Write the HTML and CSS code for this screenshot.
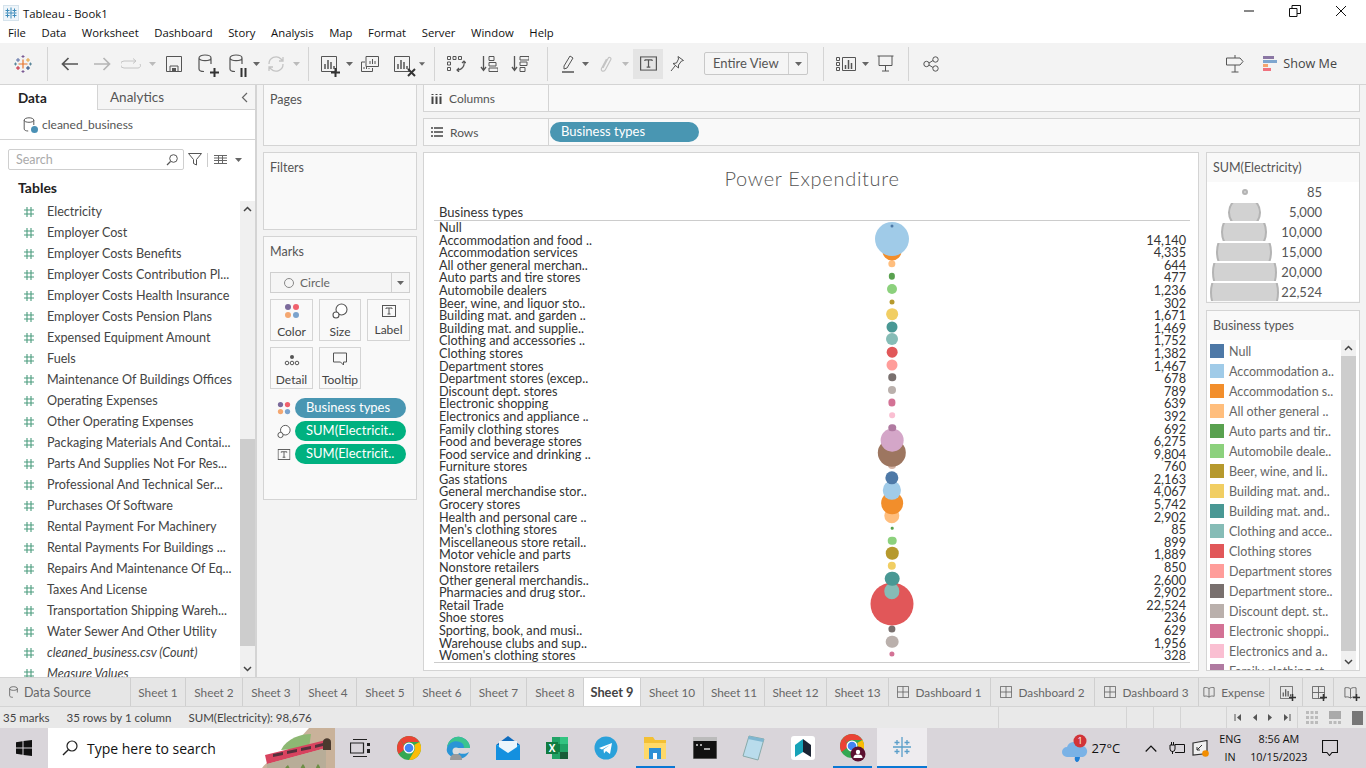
FILE: index.html
```html
<!DOCTYPE html>
<html lang="en">
<head>
    <meta charset="UTF-8">
    <title>Tableau - Book1</title>
    <link rel="stylesheet" href="styles.css">
</head>
<body>

    <!-- shared icons -->
    <svg class="defs" width="0" height="0">
        <symbol id="hash" viewBox="0 0 12 12"><path d="M4 1v10M8 1v10M1 4h10M1 8h10" fill="none" stroke="#4b9c7e" stroke-width="1.1"/></symbol>
        <symbol id="caret" viewBox="0 0 7 4"><path d="M0 0h7L3.5 4z" fill="#666"/></symbol>
        <symbol id="caret-off" viewBox="0 0 7 4"><path d="M0 0h7L3.5 4z" fill="#bbb"/></symbol>
        <symbol id="cyl" viewBox="0 0 14 20"><path d="M1 4c0-4 12-4 12 0v6M1 4c0 3.500 12 3.500 12 0M1 4v11c0 1.500 2 2.500 5 2.500" fill="none" stroke="#555" stroke-width="1.200"/></symbol>
        <symbol id="tbox" viewBox="0 0 14 12"><rect x=".5" y=".5" width="13" height="11" fill="none" stroke="#555"/><path d="M4 3h6M7 3v6M5.500 9h3M4 3v1M10 3v1" fill="none" stroke="#555"/></symbol>
        <symbol id="lasso" viewBox="0 0 16 16"><circle cx="9.500" cy="6.500" r="5.500" fill="#fff" stroke="#555" stroke-width="1.100"/><circle cx="4" cy="12" r="3" fill="#fff" stroke="#555" stroke-width="1.100"/></symbol>
        <symbol id="dots" viewBox="0 0 16 16"><circle cx="4" cy="4" r="3" fill="#7b6a9b"/><circle cx="12" cy="4" r="3" fill="#f0616d"/><circle cx="4" cy="12" r="3" fill="#f4a771"/><circle cx="12" cy="12" r="3" fill="#7ba3cd"/></symbol>
        <symbol id="grid4" viewBox="0 0 14 14"><path d="M.5.500h13v13H.5zM7 .5v13M.5 7h13" fill="none" stroke="#666"/></symbol>
        <symbol id="story" viewBox="0 0 14 14"><path d="M7 3C5 1.500 3 1.500 1 2v10c2-.5 4-.5 6 1 2-1.500 4-1.500 6-1V2c-2-.5-4-.5-6 1zM7 3v10" fill="none" stroke="#666"/></symbol>
        <symbol id="chart" viewBox="0 0 16 16"><path d="M.5.500h15v15H.5z" fill="none" stroke="#555"/><path d="M4 13V8M7 13V4M10 13V6M13 13v-3" stroke="#555" stroke-width="1.500"/></symbol>
        <symbol id="plus" viewBox="0 0 9 9"><path d="M4.500 0v9M0 4.500h9" stroke="#333" stroke-width="2"/></symbol>
        <symbol id="chrome" viewBox="0 0 24 24"><circle cx="12" cy="12" r="12" fill="#34a853"/><path d="M12 0a12 12 0 0 1 10.400 6H12a6 6 0 0 0-5.200 3L3.500 3.600A12 12 0 0 1 12 0z" fill="#ea4335"/><path d="M3.500 3.600 8 12a5 5 0 0 0 0 1L1.600 18A12 12 0 0 1 3.500 3.600z" fill="#ea4335"/><path d="M22.400 6A12 12 0 0 1 12 24l5.200-9a6 6 0 0 0 0-6z" fill="#fbbc05"/><circle cx="12" cy="12" r="5.500" fill="#fff"/><circle cx="12" cy="12" r="4.300" fill="#4285f4"/></symbol>
    </svg>

    <header class="titlebar">
        <svg class="app-icon" width="16" height="16" viewBox="0 0 16 16"><rect x=".5" y=".5" width="15" height="15" fill="#eef5fa" stroke="#d5e3ec"/><path d="M8 2.500v11M2.500 8h11M4.500 3.500v4M2.500 5.500h4M11.500 3.500v4M9.500 5.500h4M4.500 8.500v4M2.500 10.500h4M11.500 8.500v4M9.500 10.500h4" stroke="#3f8cbb" stroke-width="1"/></svg>
        <span class="app-name">Tableau - Book1</span>
        <div class="window-buttons">
            <svg width="12" height="12" viewBox="0 0 12 12"><path d="M1 6h10" stroke="#111"/></svg>
            <svg width="12" height="12" viewBox="0 0 12 12"><path d="M.5 3.500h7.500v8H.5zM3 3.500V.5h8.500v8H8" fill="none" stroke="#111"/></svg>
            <svg width="12" height="12" viewBox="0 0 12 12"><path d="M1 1l10 10M11 1 1 11" stroke="#111"/></svg>
        </div>
    </header>

    <nav class="menubar">
        <span>File</span><span>Data</span><span>Worksheet</span><span>Dashboard</span><span>Story</span><span>Analysis</span><span>Map</span><span>Format</span><span>Server</span><span>Window</span><span>Help</span>
    </nav>

    <div class="toolbar">
        <div class="tool w30 logo-tool">
            <svg width="18" height="18" viewBox="0 0 18 18"><path d="M9 4.500v9M4.500 9h9" stroke="#e8762c" stroke-width="1.200"/><path d="M4 3v4M2 5h4" stroke="#5b6fa5" stroke-width="1"/><path d="M14 3v4M12 5h4" stroke="#e8a23c" stroke-width="1"/><path d="M4 11v4M2 13h4" stroke="#c72037" stroke-width="1"/><path d="M14 11v4M12 13h4" stroke="#1f447a" stroke-width="1"/><path d="M9 0v3M7.500 1.500h3M9 15v3M7.500 16.500h3" stroke="#7a5a94" stroke-width="1"/><path d="M0 9h3M1.500 7.500v3M15 9h3M16.500 7.500v3" stroke="#5b879b" stroke-width="1"/></svg>
        </div>
        <i class="sep first-sep"></i>
        <div class="tool w32"><svg width="18" height="14" viewBox="0 0 18 14"><path d="M17 7H2M7.500 1 1.500 7l6 6" fill="none" stroke="#555" stroke-width="1.700"/></svg></div>
        <div class="tool w32"><svg width="18" height="14" viewBox="0 0 18 14"><path d="M1 7h15M10.500 1l6 6-6 6" fill="none" stroke="#b5b5b5" stroke-width="1.700"/></svg></div>
        <div class="tool w26"><svg width="20" height="12" viewBox="0 0 20 12"><path d="M14 3H3a2.500 2.500 0 0 0 0 7h14a2.500 2.500 0 0 0 2-4M12 .5 15 3l-3 2.500" fill="none" stroke="#c4c4c4"/></svg></div>
        <div class="tool w16"><svg class="caret" width="7" height="4"><use href="#caret-off"/></svg></div>
        <div class="tool w28"><svg width="16" height="16" viewBox="0 0 16 16"><path d="M.5.500h15v15H.5z" fill="none" stroke="#555"/><path d="M4 15.500V10h8v5.500" fill="none" stroke="#555"/><path d="M6 12h4v3.500H6z" fill="#555"/></svg></div>
        <div class="tool w34 ds-tool"><svg width="14" height="20"><use href="#cyl"/></svg><svg class="badge-plus" width="9" height="9"><use href="#plus"/></svg></div>
        <div class="tool w28 ds-tool"><svg width="14" height="20"><use href="#cyl"/></svg><svg class="badge-plus" width="7" height="9" viewBox="0 0 7 9"><path d="M1.500 0v9M5.500 0v9" stroke="#333" stroke-width="2"/></svg></div>
        <div class="tool w12"><svg class="caret" width="7" height="4"><use href="#caret"/></svg></div>
        <div class="tool w28"><svg width="18" height="16" viewBox="0 0 18 16"><path d="M2 8a7 7 0 0 1 12-5l2 2M16 8a7 7 0 0 1-12 5l-2-2M16 1v4h-4M2 15v-4h4" fill="none" stroke="#c4c4c4" stroke-width="1.300"/></svg></div>
        <div class="tool w12"><svg class="caret" width="7" height="4"><use href="#caret-off"/></svg></div>
        <i class="sep"></i>
        <div class="tool w28 ds-tool"><svg width="16" height="16"><use href="#chart"/></svg><svg class="badge-plus" width="9" height="9"><use href="#plus"/></svg></div>
        <div class="tool w12"><svg class="caret" width="7" height="4"><use href="#caret"/></svg></div>
        <div class="tool w30"><svg width="18" height="16" viewBox="0 0 18 16"><path d="M5 .5h12.500v10H5z" fill="#f3f3f3" stroke="#555"/><path d="M9 8V5M11.500 8V3M14 8V5" stroke="#555"/><path d="M.5 6H4M.5 6v9.500h11V12" fill="none" stroke="#555"/><path d="M3 13v-2M5.500 13v-2M8 13v-1" stroke="#555"/></svg></div>
        <div class="tool w34 ds-tool"><svg width="16" height="16"><use href="#chart"/></svg><svg class="badge-plus" width="9" height="9" viewBox="0 0 9 9"><path d="M1 1l7 7M8 1 1 8" stroke="#333" stroke-width="2"/></svg></div>
        <div class="tool w6"><svg class="caret" width="7" height="4"><use href="#caret"/></svg></div>
        <i class="sep sep-wide"></i>
        <div class="tool w30"><svg width="19" height="16" viewBox="0 0 19 16"><path d="M.5.500h3v3h-3zM6 .5h3v3H6zM11.500.5h3v3h-3zM.5 6h3v3h-3zM.5 11.500h3v3h-3z" fill="none" stroke="#555"/><path d="M17 5c1 5-2 9-7 9M12 12l-2 2 2 2M15 7l2-2 2 2" fill="none" stroke="#555" stroke-width="1.200"/></svg></div>
        <div class="tool w36"><svg width="18" height="16" viewBox="0 0 18 16"><path d="M3.500 0v14M1 11l2.500 3.500L6 11" fill="none" stroke="#555" stroke-width="1.300"/><path d="M9 .5h5v4H9zM9 6.500h7v3.500H9zM9 12h9v3.500H9z" fill="none" stroke="#555"/></svg></div>
        <div class="tool w26"><svg width="18" height="16" viewBox="0 0 18 16"><path d="M3.500 0v14M1 11l2.500 3.500L6 11" fill="none" stroke="#555" stroke-width="1.300"/><path d="M9 .5h9v3.500H9zM9 6h7v3.500H9zM9 11.500h5v4H9z" fill="none" stroke="#555"/></svg></div>
        <i class="sep sep-wider"></i>
        <div class="tool w26"><svg width="14" height="18" viewBox="0 0 14 18"><path d="M3 11 9 1l3 2-6 10-3 1z" fill="none" stroke="#555"/><path d="M1 17h12" stroke="#555" stroke-width="1.500"/></svg></div>
        <div class="tool w8"><svg class="caret" width="7" height="4"><use href="#caret"/></svg></div>
        <div class="tool w32"><svg width="13" height="18" viewBox="0 0 13 18"><path d="M4 13 9 3.500c1-2 3.500-1 2.800 1L6.500 14.500c-1.500 3-5 1.500-4-1L7.500 4" fill="none" stroke="#c4c4c4" stroke-width="1.200"/></svg></div>
        <div class="tool w8"><svg class="caret" width="7" height="4"><use href="#caret-off"/></svg></div>
        <div class="tool w30 tool-active"><svg width="17" height="15" viewBox="0 0 14 12"><use href="#tbox"/></svg></div>
        <div class="tool w28"><svg width="14" height="16" viewBox="0 0 14 16"><path d="M8 .5l5.500 4-2 .5-3 4 0 3L3 7.500l3.500-.5 2-4zM5 10l-4 5" fill="none" stroke="#555"/></svg></div>
        <div class="fit-select">
            <span class="fit-label">Entire View</span>
            <span class="fit-arrow"><svg width="7" height="4"><use href="#caret"/></svg></span>
        </div>
        <i class="sep sep-fit"></i>
        <div class="tool w30"><svg width="20" height="14" viewBox="0 0 20 14"><path d="M.5.500h3v3h-3zM.5 5.500h3v3h-3zM.5 10.500h3v3h-3zM6.500.5h13v13h-13z" fill="none" stroke="#555"/><path d="M9.500 12V8M12.500 12V3M15.500 12V6" stroke="#555" stroke-width="1.500"/></svg></div>
        <div class="tool w8"><svg class="caret" width="7" height="4"><use href="#caret"/></svg></div>
        <div class="tool w33"><svg width="17" height="17" viewBox="0 0 17 17"><path d="M.5 1h16M2 1v9.500h13V1M8.500 10.500V16M5 16h7" fill="none" stroke="#555"/></svg></div>
        <i class="sep"></i>
        <div class="tool w32"><svg width="16" height="16" viewBox="0 0 16 16"><circle cx="3.500" cy="8" r="2.700" fill="none" stroke="#555"/><circle cx="12.500" cy="3.500" r="2.700" fill="none" stroke="#555"/><circle cx="12.500" cy="12.500" r="2.700" fill="none" stroke="#555"/><path d="M6 7l4-2.500M6 9l4 2.500" stroke="#555"/></svg></div>
        <div class="toolbar-right">
            <div class="tool w30"><svg width="18" height="18" viewBox="0 0 18 18"><path d="M9 0v3M9 10v7M5.500 17h7M.5 3H14l3 3.500L14 10H.5z" fill="none" stroke="#555"/></svg></div>
            <div class="show-me">
                <svg width="14" height="16" viewBox="0 0 14 16"><rect width="11" height="3" fill="#8a76a3"/><rect y="4" width="14" height="3" fill="#7ea6cf"/><rect y="8" width="5" height="3" fill="#f4a56f"/><rect y="12" width="8" height="3" fill="#f0727e"/></svg>
                <span>Show Me</span>
            </div>
        </div>
    </div>

    <main class="workspace">

        <aside class="data-pane">
            <div class="pane-tabs">
                <div class="pane-tab pane-tab-on">Data</div>
                <div class="pane-tab">Analytics <svg class="collapse" width="7" height="11" viewBox="0 0 7 11"><path d="M6 1 1.500 5.500 6 10" fill="none" stroke="#666" stroke-width="1.200"/></svg></div>
            </div>
            <div class="source-row">
                <span class="source-icon"><svg width="12" height="16"><use href="#cyl"/></svg><i class="source-tick"></i></span>
                cleaned_business
            </div>
            <div class="search-row">
                <div class="search-box">
                    <span>Search</span>
                    <svg width="12" height="12" viewBox="0 0 12 12"><circle cx="7.500" cy="4.500" r="3.800" fill="none" stroke="#555"/><path d="M4.500 7.500 1 11" stroke="#555" stroke-width="1.300"/></svg>
                </div>
                <svg width="14" height="13" viewBox="0 0 14 13"><path d="M.5.500h13L8.500 6.500V12l-3-1.500v-4z" fill="none" stroke="#555"/></svg>
                <i class="search-sep"></i>
                <svg width="13" height="9" viewBox="0 0 13 9"><path d="M0 .5h13M0 3h13M0 5.500h13M0 8.500h13M4.500 0v9M8.500 0v9" stroke="#666"/></svg>
                <svg class="search-caret" width="7" height="4"><use href="#caret"/></svg>
            </div>
            <h3 class="tables-head">Tables</h3>
            <div class="fields-wrap">
                <ul class="fields">
                    <li><svg width="12" height="12"><use href="#hash"/></svg>Electricity</li>
                    <li><svg width="12" height="12"><use href="#hash"/></svg>Employer Cost</li>
                    <li><svg width="12" height="12"><use href="#hash"/></svg>Employer Costs Benefits</li>
                    <li><svg width="12" height="12"><use href="#hash"/></svg>Employer Costs Contribution Pl...</li>
                    <li><svg width="12" height="12"><use href="#hash"/></svg>Employer Costs Health Insurance</li>
                    <li><svg width="12" height="12"><use href="#hash"/></svg>Employer Costs Pension Plans</li>
                    <li><svg width="12" height="12"><use href="#hash"/></svg>Expensed Equipment Amount</li>
                    <li><svg width="12" height="12"><use href="#hash"/></svg>Fuels</li>
                    <li><svg width="12" height="12"><use href="#hash"/></svg>Maintenance Of Buildings Offices</li>
                    <li><svg width="12" height="12"><use href="#hash"/></svg>Operating Expenses</li>
                    <li><svg width="12" height="12"><use href="#hash"/></svg>Other Operating Expenses</li>
                    <li><svg width="12" height="12"><use href="#hash"/></svg>Packaging Materials And Contai...</li>
                    <li><svg width="12" height="12"><use href="#hash"/></svg>Parts And Supplies Not For Res...</li>
                    <li><svg width="12" height="12"><use href="#hash"/></svg>Professional And Technical Ser...</li>
                    <li><svg width="12" height="12"><use href="#hash"/></svg>Purchases Of Software</li>
                    <li><svg width="12" height="12"><use href="#hash"/></svg>Rental Payment For Machinery</li>
                    <li><svg width="12" height="12"><use href="#hash"/></svg>Rental Payments For Buildings ...</li>
                    <li><svg width="12" height="12"><use href="#hash"/></svg>Repairs And Maintenance Of Eq...</li>
                    <li><svg width="12" height="12"><use href="#hash"/></svg>Taxes And License</li>
                    <li><svg width="12" height="12"><use href="#hash"/></svg>Transportation Shipping Wareh...</li>
                    <li><svg width="12" height="12"><use href="#hash"/></svg>Water Sewer And Other Utility</li>
                    <li class="calc"><svg width="12" height="12"><use href="#hash"/></svg>cleaned_business.csv (Count)</li>
                    <li class="calc"><svg width="12" height="12"><use href="#hash"/></svg>Measure Values</li>
                </ul>
                <div class="scrollbar">
                    <svg class="scroll-up" width="9" height="6" viewBox="0 0 9 6"><path d="M1 5l3.500-3.500L8 5" fill="none" stroke="#444" stroke-width="1.500"/></svg>
                    <div class="scroll-thumb"></div>
                    <svg class="scroll-down" width="9" height="6" viewBox="0 0 9 6"><path d="M1 1l3.500 3.500L8 1" fill="none" stroke="#444" stroke-width="1.500"/></svg>
                </div>
            </div>
        </aside>

        <section class="cards">
            <div class="card pages-card"><div class="card-title">Pages</div></div>
            <div class="card filters-card"><div class="card-title">Filters</div></div>
            <div class="card marks-card">
                <div class="card-title">Marks</div>
                <div class="mark-select">
                    <span class="mark-type"><i class="ring"></i>Circle</span>
                    <span class="mark-arrow"><svg width="7" height="4"><use href="#caret"/></svg></span>
                </div>
                <div class="mark-buttons">
                    <div class="mark-btn"><svg width="16" height="16"><use href="#dots"/></svg>Color</div>
                    <div class="mark-btn"><svg width="16" height="16"><use href="#lasso"/></svg>Size</div>
                    <div class="mark-btn"><svg width="14" height="12" viewBox="0 0 14 12"><use href="#tbox"/></svg>Label</div>
                    <div class="mark-btn"><svg width="16" height="16" viewBox="0 0 16 16"><circle cx="8" cy="6" r="2" fill="#555"/><circle cx="3" cy="12" r="1.800" fill="none" stroke="#555"/><circle cx="8" cy="12" r="1.800" fill="none" stroke="#555"/><circle cx="13" cy="12" r="1.800" fill="none" stroke="#555"/></svg>Detail</div>
                    <div class="mark-btn"><svg width="16" height="16" viewBox="0 0 16 16"><path d="M1.500 2h13v9h-3v3l-3-3h-7z" fill="none" stroke="#555"/></svg>Tooltip</div>
                </div>
                <div class="mark-pills">
                    <div class="mark-pill"><svg width="14" height="14"><use href="#dots"/></svg><span class="pill pill-blue">Business types</span></div>
                    <div class="mark-pill"><svg width="15" height="15"><use href="#lasso"/></svg><span class="pill pill-green">SUM(Electricit..</span></div>
                    <div class="mark-pill"><svg width="13" height="11" viewBox="0 0 14 12"><use href="#tbox"/></svg><span class="pill pill-green">SUM(Electricit..</span></div>
                </div>
            </div>
        </section>

        <section class="view-col">
            <div class="shelf">
                <div class="shelf-name"><svg width="11" height="11" viewBox="0 0 11 11"><path d="M1.500 1v1M5.500 1v1M9.500 1v1M1.500 3.500V11M5.500 3.500V11M9.500 3.500V11" stroke="#444" stroke-width="2"/></svg>Columns</div>
            </div>
            <div class="shelf">
                <div class="shelf-name"><svg width="12" height="10" viewBox="0 0 12 10"><path d="M0 1h2M3 1h9M0 5h2M3 5h9M0 9h2M3 9h9" stroke="#444" stroke-width="1.500"/></svg>Rows</div>
                <span class="pill pill-blue rows-pill">Business types</span>
            </div>

            <div class="view-area">
                <div class="chart">
                    <h1 class="chart-title">Power Expenditure</h1>
                    <div class="chart-head">Business types</div>
                    <div class="chart-rows">
                        <div class="row"><span>Null</span><i class="dot" style="--d:3px;--c:#4e79a7;z-index:35"></i></div>
                        <div class="row"><span>Accommodation and food ..</span><i class="dot" style="--d:34px;--c:#a0cbe8;z-index:34"></i><span>14,140</span></div>
                        <div class="row"><span>Accommodation services</span><i class="dot" style="--d:19px;--c:#f28e2b;z-index:33"></i><span>4,335</span></div>
                        <div class="row"><span>All other general merchan..</span><i class="dot" style="--d:7.3px;--c:#ffbe7d;z-index:32"></i><span>644</span></div>
                        <div class="row"><span>Auto parts and tire stores</span><i class="dot" style="--d:6.3px;--c:#59a14f;z-index:31"></i><span>477</span></div>
                        <div class="row"><span>Automobile dealers</span><i class="dot" style="--d:10px;--c:#8cd17d;z-index:30"></i><span>1,236</span></div>
                        <div class="row"><span>Beer, wine, and liquor sto..</span><i class="dot" style="--d:5px;--c:#b6992d;z-index:29"></i><span>302</span></div>
                        <div class="row"><span>Building mat. and garden ..</span><i class="dot" style="--d:11.7px;--c:#f1ce63;z-index:28"></i><span>1,671</span></div>
                        <div class="row"><span>Building mat. and supplie..</span><i class="dot" style="--d:11px;--c:#499894;z-index:27"></i><span>1,469</span></div>
                        <div class="row"><span>Clothing and accessories ..</span><i class="dot" style="--d:12px;--c:#86bcb6;z-index:26"></i><span>1,752</span></div>
                        <div class="row"><span>Clothing stores</span><i class="dot" style="--d:10.7px;--c:#e15759;z-index:25"></i><span>1,382</span></div>
                        <div class="row"><span>Department stores</span><i class="dot" style="--d:11px;--c:#ff9d9a;z-index:24"></i><span>1,467</span></div>
                        <div class="row"><span>Department stores (excep..</span><i class="dot" style="--d:7.5px;--c:#79706e;z-index:23"></i><span>678</span></div>
                        <div class="row"><span>Discount dept. stores</span><i class="dot" style="--d:8px;--c:#bab0ac;z-index:22"></i><span>789</span></div>
                        <div class="row"><span>Electronic shopping</span><i class="dot" style="--d:7.2px;--c:#d37295;z-index:21"></i><span>639</span></div>
                        <div class="row"><span>Electronics and appliance ..</span><i class="dot" style="--d:5.7px;--c:#fabfd2;z-index:20"></i><span>392</span></div>
                        <div class="row"><span>Family clothing stores</span><i class="dot" style="--d:7.5px;--c:#b07aa1;z-index:19"></i><span>692</span></div>
                        <div class="row"><span>Food and beverage stores</span><i class="dot" style="--d:22.7px;--c:#d4a6c8;z-index:18"></i><span>6,275</span></div>
                        <div class="row"><span>Food service and drinking ..</span><i class="dot" style="--d:28.4px;--c:#9d7660;z-index:17"></i><span>9,804</span></div>
                        <div class="row"><span>Furniture stores</span><i class="dot" style="--d:7.9px;--c:#d7b5a6;z-index:16"></i><span>760</span></div>
                        <div class="row"><span>Gas stations</span><i class="dot" style="--d:13.3px;--c:#4e79a7;z-index:15"></i><span>2,163</span></div>
                        <div class="row"><span>General merchandise stor..</span><i class="dot" style="--d:18.3px;--c:#a0cbe8;z-index:14"></i><span>4,067</span></div>
                        <div class="row"><span>Grocery stores</span><i class="dot" style="--d:21.7px;--c:#f28e2b;z-index:13"></i><span>5,742</span></div>
                        <div class="row"><span>Health and personal care ..</span><i class="dot" style="--d:15.4px;--c:#ffbe7d;z-index:12"></i><span>2,902</span></div>
                        <div class="row"><span>Men's clothing stores</span><i class="dot" style="--d:2.6px;--c:#59a14f;z-index:11"></i><span>85</span></div>
                        <div class="row"><span>Miscellaneous store retail..</span><i class="dot" style="--d:8.6px;--c:#8cd17d;z-index:10"></i><span>899</span></div>
                        <div class="row"><span>Motor vehicle and parts</span><i class="dot" style="--d:12.5px;--c:#b6992d;z-index:9"></i><span>1,889</span></div>
                        <div class="row"><span>Nonstore retailers</span><i class="dot" style="--d:8.4px;--c:#f1ce63;z-index:8"></i><span>850</span></div>
                        <div class="row"><span>Other general merchandis..</span><i class="dot" style="--d:14.6px;--c:#499894;z-index:7"></i><span>2,600</span></div>
                        <div class="row"><span>Pharmacies and drug stor..</span><i class="dot" style="--d:15.4px;--c:#86bcb6;z-index:6"></i><span>2,902</span></div>
                        <div class="row"><span>Retail Trade</span><i class="dot" style="--d:43px;--c:#e15759;z-index:5"></i><span>22,524</span></div>
                        <div class="row"><span>Shoe stores</span><i class="dot" style="--d:4.4px;--c:#ff9d9a;z-index:4"></i><span>236</span></div>
                        <div class="row"><span>Sporting, book, and musi..</span><i class="dot" style="--d:7.2px;--c:#79706e;z-index:3"></i><span>629</span></div>
                        <div class="row"><span>Warehouse clubs and sup..</span><i class="dot" style="--d:12.7px;--c:#bab0ac;z-index:2"></i><span>1,956</span></div>
                        <div class="row"><span>Women's clothing stores</span><i class="dot" style="--d:5.2px;--c:#d37295;z-index:1"></i><span>328</span></div>
                    </div>
                </div>

                <div class="legends">
                    <div class="legend size-legend">
                        <div class="legend-title">SUM(Electricity)</div>
                        <div class="legend-body">
                            <div class="size-row"><span class="size-cell"><i class="size-dot" style="--d:6px"></i></span><span>85</span></div>
                            <div class="size-row"><span class="size-cell"><i class="size-dot" style="--d:33px"></i></span><span>5,000</span></div>
                            <div class="size-row"><span class="size-cell"><i class="size-dot" style="--d:46px"></i></span><span>10,000</span></div>
                            <div class="size-row"><span class="size-cell"><i class="size-dot" style="--d:56px"></i></span><span>15,000</span></div>
                            <div class="size-row"><span class="size-cell"><i class="size-dot" style="--d:65px"></i></span><span>20,000</span></div>
                            <div class="size-row"><span class="size-cell"><i class="size-dot" style="--d:69px"></i></span><span>22,524</span></div>
                        </div>
                    </div>
                    <div class="legend color-legend">
                        <div class="legend-title">Business types</div>
                        <div class="color-body">
                            <ul class="color-list">
                                <li><i style="background:#4e79a7"></i>Null</li>
                                <li><i style="background:#a0cbe8"></i>Accommodation a..</li>
                                <li><i style="background:#f28e2b"></i>Accommodation s..</li>
                                <li><i style="background:#ffbe7d"></i>All other general ..</li>
                                <li><i style="background:#59a14f"></i>Auto parts and tir..</li>
                                <li><i style="background:#8cd17d"></i>Automobile deale..</li>
                                <li><i style="background:#b6992d"></i>Beer, wine, and li..</li>
                                <li><i style="background:#f1ce63"></i>Building mat. and..</li>
                                <li><i style="background:#499894"></i>Building mat. and..</li>
                                <li><i style="background:#86bcb6"></i>Clothing and acce..</li>
                                <li><i style="background:#e15759"></i>Clothing stores</li>
                                <li><i style="background:#ff9d9a"></i>Department stores</li>
                                <li><i style="background:#79706e"></i>Department store..</li>
                                <li><i style="background:#bab0ac"></i>Discount dept. st..</li>
                                <li><i style="background:#d37295"></i>Electronic shoppi..</li>
                                <li><i style="background:#fabfd2"></i>Electronics and a..</li>
                                <li><i style="background:#b07aa1"></i>Family clothing st..</li>
                            </ul>
                            <div class="scrollbar legend-scroll">
                                <svg class="scroll-up" width="9" height="6" viewBox="0 0 9 6"><path d="M1 5l3.500-3.500L8 5" fill="none" stroke="#444" stroke-width="1.500"/></svg>
                                <div class="scroll-thumb"></div>
                                <svg class="scroll-down" width="9" height="6" viewBox="0 0 9 6"><path d="M1 1l3.500 3.500L8 1" fill="none" stroke="#444" stroke-width="1.500"/></svg>
                            </div>
                        </div>
                    </div>
                </div>
            </div>
        </section>
    </main>

    <div class="tabbar">
        <div class="tab tab-source"><svg width="9" height="13"><use href="#cyl"/></svg>Data Source</div>
        <div class="tab t55">Sheet 1</div>
        <div class="tab t57">Sheet 2</div>
        <div class="tab t57">Sheet 3</div>
        <div class="tab t57">Sheet 4</div>
        <div class="tab t57">Sheet 5</div>
        <div class="tab t57">Sheet 6</div>
        <div class="tab t56">Sheet 7</div>
        <div class="tab t57">Sheet 8</div>
        <div class="tab t57 tab-on">Sheet 9</div>
        <div class="tab t63">Sheet 10</div>
        <div class="tab t61">Sheet 11</div>
        <div class="tab t62">Sheet 12</div>
        <div class="tab t62">Sheet 13</div>
        <div class="tab t102"><svg width="12" height="12"><use href="#grid4"/></svg>Dashboard 1</div>
        <div class="tab t104"><svg width="12" height="12"><use href="#grid4"/></svg>Dashboard 2</div>
        <div class="tab t104"><svg width="12" height="12"><use href="#grid4"/></svg>Dashboard 3</div>
        <div class="tab t71"><svg width="12" height="12"><use href="#story"/></svg>Expense</div>
        <div class="tab t33 tab-new"><svg width="13" height="13"><use href="#chart"/></svg><svg class="tab-plus" width="7" height="7"><use href="#plus"/></svg></div>
        <div class="tab t31 tab-new"><svg width="13" height="13"><use href="#grid4"/></svg><svg class="tab-plus" width="7" height="7"><use href="#plus"/></svg></div>
        <div class="tab tab-last tab-new"><svg width="13" height="13"><use href="#story"/></svg><svg class="tab-plus" width="7" height="7"><use href="#plus"/></svg></div>
    </div>

    <div class="statusbar">
        <span class="status-text">35 marks</span>
        <span class="status-text">35 rows by 1 column</span>
        <span class="status-text">SUM(Electricity): 98,676</span>
        <div class="status-cells">
            <i class="cell c128"></i><i class="cell c27"></i><i class="cell c27"></i><i class="cell c46"></i>
            <div class="cell pager">
                <svg width="9" height="9" viewBox="0 0 9 9"><path d="M1 1v7" stroke="#555"/><path d="M7 1v7L3 4.500z" fill="#555"/></svg>
                <svg width="9" height="9" viewBox="0 0 9 9"><path d="M7 1v7L3 4.500z" fill="#555"/></svg>
                <svg width="9" height="9" viewBox="0 0 9 9"><path d="M2 1v7l4-3.500z" fill="#555"/></svg>
                <svg width="9" height="9" viewBox="0 0 9 9"><path d="M8 1v7" stroke="#555"/><path d="M2 1v7l4-3.500z" fill="#555"/></svg>
            </div>
            <div class="view-modes">
                <svg width="12" height="14" viewBox="0 0 12 14"><path d="M0 0h3v3H0zM4.500 0h3v3h-3zM9 0h3v3H9zM0 5h3v3H0zM4.500 5h3v3h-3zM9 5h3v3H9zM0 10h3v3H0zM4.500 10h3v3h-3zM9 10h3v3H9z" fill="#bbb"/></svg>
                <svg width="12" height="14" viewBox="0 0 12 14"><path d="M0 0h12v8H0z" fill="#aaa"/><path d="M0 10h3v3H0zM4.500 10h3v3h-3zM9 10h3v3H9z" fill="#bbb"/></svg>
                <svg width="11" height="14" viewBox="0 0 11 14"><path d="M0 0h11v14H0z" fill="#777"/></svg>
            </div>
        </div>
    </div>

    <footer class="taskbar">
        <div class="start"><svg width="16" height="16" viewBox="0 0 16 16"><path d="M0 2.200 6.500 1.300v6.200H0zM7.500 1.100 16 0v7.500H7.500zM0 8.500h6.500v6.200L0 13.800zM7.500 8.500H16V16l-8.500-1.100z" fill="#111"/></svg></div>
        <div class="task-search">
            <svg width="16" height="16" viewBox="0 0 16 16"><circle cx="10" cy="6" r="5" fill="none" stroke="#222" stroke-width="1.200"/><path d="M6.300 9.700 1 15" stroke="#222" stroke-width="1.400"/></svg>
            <span>Type here to search</span>
            <svg class="train" width="76" height="50" viewBox="0 0 76 50">
                <path d="M50 0h26v50H0c0-8 6-16 14-18l20-14z" fill="#c9b29a"/>
                <path d="M22 22c6-12 20-16 30-16l-2 14z" fill="#8db873"/>
                <path d="M6 27 67 12v8L8 36z" fill="#d8435f"/>
                <path d="M14 26l10-2v3l-10 2zM28 23l10-2v3l-10 2zM42 20l10-2v3l-10 2zM56 17l8-2v3l-8 2z" fill="#55303c"/>
                <path d="M8 36 67 20v30H8z" fill="#b8ad98"/>
                <path d="M24 50c0-7 2-11 5-13 2 3 3 7 3 13zM40 50c0-7 2-12 4-14 3 3 3 8 3 14zM56 50c0-7 1-12 3-14 3 3 3 8 3 14z" fill="#6d8f46"/>
                <path d="M64 14c0-5 8-5 8 0v8h-8z" fill="#4b3a2e"/>
            </svg>
        </div>
        <div class="task-apps">
            <div class="task-app"><svg width="20" height="18" viewBox="0 0 20 18"><path d="M3 .5h14M3 17.500h14M.5 4h13v10H.5z" fill="none" stroke="#222" stroke-width="1.200"/><path d="M17 4h3v3h-3zM17 10h3v4h-3z" fill="#222"/></svg></div>
            <div class="task-app"><svg width="24" height="24"><use href="#chrome"/></svg></div>
            <div class="task-app"><svg width="25" height="25" viewBox="0 0 25 25"><path d="M1 12C2 4 8 0 14 1c6 1 10 6 10 11H10c0 5 7 8 13 4-3 7-12 9-17 5C2 18 0 16 1 12z" fill="#2b95d6"/><path d="M1 12C3 6 9 4 14 6c3 1 4 3 4 6h6c0-5-4-10-10-11C8 0 2 4 1 12z" fill="#3bc48f"/><circle cx="10" cy="15" r="3.500" fill="#ddd"/><path d="M4 24c0-5 3-6 6-6s6 1 6 6z" fill="#9a9a9a"/></svg></div>
            <div class="task-app"><svg width="24" height="24" viewBox="0 0 24 24"><path d="M12 0 24 9v14H0V9z" fill="#0f6cbd"/><path d="M0 9h24v14H0z" fill="#28a8ea"/><path d="M3 5h18v11l-9 4-9-4z" fill="#eaf5fc"/><path d="M0 9l12 8 12-8v15H0z" fill="#1490df"/></svg></div>
            <div class="task-app"><svg width="24" height="24" viewBox="0 0 24 24"><path d="M7 1h16v22H7z" fill="#21a366"/><path d="M15 1h8v7h-8z" fill="#33c481"/><path d="M7 8h8v8H7z" fill="#107c41"/><path d="M15 16h8v7h-8z" fill="#185c37"/><path d="M1 6h12v12H1z" fill="#107c41"/><text class="xl" x="7" y="16" text-anchor="middle">X</text></svg></div>
            <div class="task-app"><svg width="24" height="24" viewBox="0 0 24 24"><circle cx="12" cy="12" r="11.500" fill="#2aa1da"/><path d="M5 12 18 7l-2 11-4-3-2 2.500-.5-4L16 9l-8 4.500z" fill="#fff"/></svg></div>
            <div class="task-app task-open"><svg width="24" height="22" viewBox="0 0 24 22"><path d="M1 0h9l2 3h11v19H1z" fill="#f3c034"/><path d="M1 6h22v16H1z" fill="#ffd968"/><path d="M6 11h12v11H6z" fill="#2d8fd5"/><path d="M10 16h4v6h-4z" fill="#fff"/></svg></div>
            <div class="task-app"><svg width="24" height="22" viewBox="0 0 24 22"><rect width="24" height="22" fill="#111" stroke="#999"/><rect width="24" height="4" fill="#bbb"/><path d="M3 8h2M7 8h2M11 12h6" stroke="#ddd" stroke-width="1.500"/></svg></div>
            <div class="task-app"><svg width="24" height="26" viewBox="0 0 24 26"><path d="M7 1l15 3-6 21-15-4z" fill="#b9dcec" stroke="#8aa"/><path d="M7 1l15 3-1 3-15-3z" fill="#7fb6d0"/></svg></div>
            <div class="task-app"><svg width="24" height="24" viewBox="0 0 24 24"><rect width="24" height="24" rx="3" fill="#fff"/><path d="M12 3 4 9v12l8-5z" fill="#17a3b8"/><path d="M12 3l8 6v12l-8-5z" fill="#1c2433"/></svg></div>
            <div class="task-app task-open"><svg width="26" height="28" viewBox="0 0 26 28"><use href="#chrome" width="24" height="24"/><circle cx="18" cy="20" r="7.500" fill="#5c1130"/><circle cx="18" cy="18" r="2.200" fill="#fff"/><path d="M13.500 24c0-3 2-3.500 4.500-3.500s4.500.5 4.500 3.500z" fill="#fff"/></svg></div>
            <div class="task-app task-active"><svg width="22" height="24" viewBox="0 0 22 24"><path d="M11 2v20M2 12h18M6 5v5M3.500 7.500h5M16 5v5M13.500 7.500h5M6 14v5M3.500 16.500h5M16 14v5M13.500 16.500h5" stroke="#5a9ec9" stroke-width="1.300"/></svg></div>
        </div>
        <div class="tray">
            <div class="weather">
                <svg width="27" height="30" viewBox="0 0 27 30"><path d="M5 24a5 5 0 0 1 0-10 7 7 0 0 1 13-1 5.500 5.500 0 0 1 3 11z" fill="#7ab2e6"/><path d="M13 24h5c0 3-2 5-3 5s-3-2-2-5z" fill="#1e7fd6"/><circle cx="18" cy="8" r="6.500" fill="#d13438"/><text class="weather-num" x="18" y="11" text-anchor="middle">1</text></svg>
                <span>27°C</span>
            </div>
            <svg class="tray-up" width="12" height="7" viewBox="0 0 12 7"><path d="M.7 6.500 6 1l5.300 5.500" fill="none" stroke="#111" stroke-width="1.200"/></svg>
            <svg class="tray-plug" width="16" height="12" viewBox="0 0 16 12"><path d="M6 2.500h9.500v8H6" fill="none" stroke="#111"/><path d="M1 3h5v4a2 2 0 0 1-5 0zM2.500 0v3M4.500 0v3M3.500 9v3" fill="none" stroke="#111"/></svg>
            <svg class="tray-net" width="17" height="17" viewBox="0 0 17 17"><path d="M1 3 15 .5v13L1 15z" fill="#f0f0f0" stroke="#333" stroke-width="1.200"/><path d="M5 10l5-5M5 7v3h3" fill="none" stroke="#333"/><circle cx="13.500" cy="13.500" r="3.300" fill="#f28e00"/></svg>
            <div class="tray-lang"><span>ENG</span><span>IN</span></div>
            <div class="tray-clock"><span>8:56 AM</span><span>10/15/2023</span></div>
            <svg class="tray-note" width="16" height="16" viewBox="0 0 16 16"><path d="M.5.500h15v12H10l-2.500 3-2.500-3H.5z" fill="none" stroke="#111" stroke-width="1.100"/></svg>
        </div>
    </footer>

</body>
</html>
```

FILE: styles.css
```css
html, body {
    margin: 0;
    padding: 0;
}
body {
    width: 1366px;
    height: 768px;
    overflow: hidden;
    display: flex;
    flex-direction: column;
    background: #fff;
    color: #333;
    font-family: "Lato", "Open Sans", sans-serif;
    font-size: 12.5px;
}
.defs {
    position: absolute;
}
ul {
    list-style: none;
    margin: 0;
    padding: 0;
}
i {
    display: block;
    font-style: normal;
}

/* window chrome */
.titlebar {
    height: 26px;
    flex: none;
    display: flex;
    align-items: center;
    padding-left: 3px;
    font-family: "Open Sans", sans-serif;
    font-size: 11.3px;
    color: #111;
}
.app-name {
    margin-left: 4px;
}
.window-buttons {
    margin-left: auto;
    display: flex;
    gap: 34px;
    padding-right: 19px;
    padding-bottom: 4px;
}
.menubar {
    height: 17px;
    flex: none;
    display: flex;
    gap: 15.6px;
    padding-left: 8px;
    font-family: "Open Sans", sans-serif;
    font-size: 11.3px;
    line-height: 14px;
    color: #111;
}

/* toolbar */
.toolbar {
    height: 41px;
    flex: none;
    display: flex;
    align-items: center;
    padding-left: 8px;
    background: #f3f3f3;
}
.tool {
    height: 30px;
    position: relative;
    flex: none;
    display: flex;
    align-items: center;
    justify-content: center;
}
.w6 { width: 6px; }
.w8 { width: 8px; }
.w12 { width: 12px; }
.w16 { width: 16px; }
.w26 { width: 26px; }
.w28 { width: 28px; }
.w30 { width: 30px; }
.w32 { width: 32px; }
.w33 { width: 33px; }
.w34 { width: 34px; }
.w36 { width: 36px; }
.sep {
    width: 1px;
    height: 34px;
    flex: none;
    margin: 0 6px;
    background: #d4d4d4;
}
.first-sep {
    margin: 0 6px 0 9px;
}
.sep-wide {
    margin: 0 6px 0 9px;
}
.sep-wider {
    margin: 0 7px 0 14px;
}
.sep-fit {
    margin: 0 7px 0 15px;
}
.badge-plus {
    position: absolute;
    right: 3px;
    bottom: 2px;
}
.tool-active {
    margin-left: 4px;
    background: #e4e4e4;
}
.fit-select {
    width: 102px;
    height: 21px;
    margin-left: 13px;
    flex: none;
    display: flex;
    border: 1px solid #c8c8c8;
    border-radius: 2px;
    background: #f5f5f5;
    font-size: 13px;
    line-height: 20px;
    color: #555;
}
.fit-label {
    flex: 1;
    padding-left: 8px;
}
.fit-arrow {
    width: 18px;
    display: flex;
    align-items: center;
    justify-content: center;
    border-left: 1px solid #d0d0d0;
}
.toolbar-right {
    margin-left: auto;
    display: flex;
    align-items: center;
}
.show-me {
    display: flex;
    align-items: center;
    gap: 6px;
    margin-left: 13px;
    padding-right: 29px;
    font-family: "Open Sans", sans-serif;
    font-size: 12.6px;
    color: #444;
}

/* workspace */
.workspace {
    height: 593px;
    flex: none;
    display: flex;
    background: #f3f3f3;
    border-top: 1px solid #d4d4d4;
    box-sizing: border-box;
}
.data-pane {
    width: 255px;
    flex: none;
    display: flex;
    flex-direction: column;
    background: #fff;
    border-right: 2px solid #d4d4d4;
}
.pane-tabs {
    height: 25px;
    flex: none;
    display: flex;
}
.pane-tab {
    flex: 1;
    display: flex;
    align-items: center;
    padding-left: 12px;
    background: #f5f5f5;
    border-left: 1px solid #d4d4d4;
    border-bottom: 1px solid #d4d4d4;
    font-size: 13.500px;
    color: #555;
}
.pane-tab-on {
    flex: none;
    width: 79px;
    padding-left: 18px;
    border: 0;
    background: #fff;
    font-weight: 700;
    color: #222;
}
.collapse {
    margin-left: auto;
    margin-right: 7px;
}
.source-row {
    height: 29px;
    flex: none;
    display: flex;
    align-items: center;
    gap: 7px;
    padding-left: 23px;
    border-bottom: 1px solid #d4d4d4;
    font-size: 12px;
    color: #555;
}
.source-icon {
    position: relative;
    display: flex;
}
.source-tick {
    position: absolute;
    right: -3px;
    bottom: 0;
    width: 7px;
    height: 7px;
    border-radius: 50%;
    background: #4a90b5;
}
.search-row {
    height: 21px;
    flex: none;
    display: flex;
    align-items: center;
    margin: 9px 0 0 8px;
}
.search-box {
    width: 176px;
    height: 21px;
    box-sizing: border-box;
    display: flex;
    align-items: center;
    justify-content: space-between;
    padding: 0 5px 0 7px;
    margin-right: 4px;
    border: 1px solid #cfcfcf;
    border-radius: 2px;
    color: #aaa;
}
.search-sep {
    width: 1px;
    height: 14px;
    margin: 0 6px 0 5px;
    background: #ccc;
}
.search-caret {
    margin-left: 8px;
}
.tables-head {
    height: 22px;
    margin: 9px 0 0;
    padding-left: 18px;
    font-size: 14px;
    line-height: 18px;
    font-weight: 700;
    color: #222;
}
.fields-wrap {
    flex: 1;
    min-height: 0;
    display: flex;
    overflow: hidden;
}
.fields {
    flex: 1;
    overflow: hidden;
}
.fields li {
    height: 21px;
    display: flex;
    align-items: center;
    gap: 12px;
    padding-left: 23px;
    font-size: 12.6px;
    color: #444;
    white-space: nowrap;
}
.fields li.calc {
    font-style: italic;
}
.scrollbar {
    width: 15px;
    flex: none;
    display: flex;
    flex-direction: column;
    align-items: center;
    background: #f0f0f0;
}
.scroll-up {
    margin-top: 5px;
    flex: none;
}
.scroll-thumb {
    width: 100%;
    flex: 1;
    margin-top: 227px;
    margin-bottom: 20px;
    background: #cdcdcd;
}
.scroll-down {
    flex: none;
    margin-bottom: 5px;
}

/* side cards */
.cards {
    width: 154px;
    flex: none;
    display: flex;
    flex-direction: column;
    gap: 6px;
    margin-left: 6px;
}
.card {
    box-sizing: border-box;
    flex: none;
    padding: 7px 6px;
    background: #f9f9f9;
    border: 1px solid #d4d4d4;
}
.pages-card {
    height: 61px;
    border-top: 0;
}
.filters-card {
    height: 78px;
}
.marks-card {
    height: 264px;
}
.card-title {
    line-height: 15px;
    color: #555;
}
.mark-select {
    height: 19px;
    margin-top: 13px;
    display: flex;
    border: 1px solid #cfcfcf;
    background: #f5f5f5;
    color: #666;
    font-size: 12px;
}
.mark-type {
    flex: 1;
    display: flex;
    align-items: center;
    gap: 6px;
    padding-left: 13px;
}
.ring {
    width: 8px;
    height: 8px;
    border: 1px solid #888;
    border-radius: 50%;
}
.mark-arrow {
    width: 17px;
    display: flex;
    align-items: center;
    justify-content: center;
    border-left: 1px solid #d0d0d0;
}
.mark-buttons {
    display: grid;
    grid-template-columns: 43px 42px 43px;
    gap: 6px;
    margin-top: 6px;
}
.mark-btn {
    height: 42px;
    box-sizing: border-box;
    display: flex;
    flex-direction: column;
    align-items: center;
    justify-content: center;
    gap: 5px;
    padding-top: 2px;
    border: 1px solid #d4d4d4;
    font-size: 12px;
    color: #444;
}
.mark-pills {
    display: flex;
    flex-direction: column;
    gap: 3px;
    margin-top: 9px;
}
.mark-pill {
    height: 20px;
    display: flex;
    align-items: center;
    padding-left: 7px;
}
.mark-pill svg {
    width: 14px;
    flex: none;
}
.mark-pill .pill {
    margin-left: 4px;
    width: 111px;
}
.pill {
    display: block;
    box-sizing: border-box;
    height: 20px;
    padding-left: 11px;
    border-radius: 10px;
    font-size: 13px;
    line-height: 19px;
    color: #fff;
    white-space: nowrap;
}
.pill-blue {
    background: #4996b2;
}
.pill-green {
    background: #00b180;
}

/* shelves and view */
.view-col {
    width: 937px;
    flex: none;
    display: flex;
    flex-direction: column;
    margin-left: 6px;
}
.shelf {
    height: 28px;
    flex: none;
    display: flex;
    align-items: center;
    margin-bottom: 6px;
    background: #f9f9f9;
    border: 1px solid #d4d4d4;
    box-sizing: border-box;
}
.shelf:first-child {
    height: 27px;
    border-top: 0;
}
.shelf-name {
    width: 125px;
    height: 100%;
    flex: none;
    box-sizing: border-box;
    display: flex;
    align-items: center;
    gap: 7px;
    padding-left: 7px;
    border-right: 1px solid #d4d4d4;
    color: #555;
    font-size: 12px;
}
.rows-pill {
    width: 149px;
    margin-left: 1px;
}
.view-area {
    flex: 1;
    min-height: 0;
    display: flex;
    gap: 7px;
    padding-bottom: 6px;
}
.chart {
    width: 776px;
    box-sizing: border-box;
    flex: none;
    padding: 0 8px 0 10px;
    background: #fff;
    border: 1px solid #d4d4d4;
}
.chart-title {
    height: 30px;
    margin: 12px 0 0;
    text-align: center;
    font-size: 20px;
    font-weight: 300;
    line-height: 27px;
    letter-spacing: .7px;
    color: #555;
}
.chart-head {
    height: 16px;
    margin-top: 9px;
    padding-left: 5px;
    font-size: 13px;
    line-height: 16px;
    border-bottom: 1px solid #ccc;
    color: #333;
}
.chart-rows {
    height: 441px;
    border-bottom: 1px solid #ccc;
}
.row {
    height: 12.600px;
    position: relative;
    display: flex;
    justify-content: space-between;
    padding: 0 4px 0 5px;
    line-height: 12.600px;
    font-size: 12.7px;
    color: #333;
    white-space: nowrap;
}
.dot {
    position: absolute;
    left: 458px;
    top: 5px;
    width: var(--d);
    height: var(--d);
    transform: translate(-50%, -50%);
    border-radius: 50%;
    background: var(--c);
}
.legends {
    width: 154px;
    flex: none;
    display: flex;
    flex-direction: column;
    gap: 7px;
}
.legend {
    box-sizing: border-box;
    background: #f9f9f9;
    border: 1px solid #d4d4d4;
}
.size-legend {
    height: 151px;
    flex: none;
}
.color-legend {
    flex: 1;
    min-height: 0;
    display: flex;
    flex-direction: column;
}
.legend-title {
    height: 29px;
    flex: none;
    padding-left: 6px;
    line-height: 29px;
    color: #555;
}
.legend-body {
    display: flex;
    flex-direction: column;
    gap: 2px;
    padding: 1px 0 0;
    background: #fff;
}
.size-row {
    height: 18px;
    display: flex;
    align-items: center;
    justify-content: space-between;
    padding-right: 37px;
    font-size: 13px;
    color: #555;
}
.size-cell {
    width: 75px;
    height: 18px;
    display: flex;
    align-items: center;
    justify-content: center;
    overflow: hidden;
}
.size-dot {
    width: var(--d);
    height: var(--d);
    flex: none;
    box-sizing: border-box;
    border: 2px solid #b4b4b4;
    border-radius: 50%;
    background: #d2d2d2;
}
.color-body {
    flex: 1;
    min-height: 0;
    display: flex;
    background: #fff;
    overflow: hidden;
}
.color-list {
    flex: 1;
    overflow: hidden;
    padding: 1px 0 0 3px;
}
.color-list li {
    height: 20px;
    display: flex;
    align-items: center;
    gap: 5px;
    font-size: 12.500px;
    color: #666;
    white-space: nowrap;
}
.color-list i {
    width: 14px;
    height: 14px;
    flex: none;
}
.legend-scroll {
    margin-right: 3px;
}
.legend-scroll .scroll-thumb {
    margin-top: 5px;
    margin-bottom: 8px;
}

/* sheet tabs */
.tabbar {
    height: 30px;
    flex: none;
    display: flex;
    background: #e6e6e6;
    border-top: 1px solid #d4d4d4;
    border-bottom: 1px solid #d4d4d4;
    box-sizing: border-box;
}
.tab {
    box-sizing: border-box;
    flex: none;
    position: relative;
    display: flex;
    align-items: center;
    justify-content: center;
    gap: 6px;
    border-right: 1px solid #cfcfcf;
    font-size: 11.8px;
    color: #666;
    white-space: nowrap;
}
.tab-source {
    width: 131px;
    justify-content: flex-start;
    padding-left: 9px;
    font-size: 12.5px;
}
.t55 { width: 55px; }
.t56 { width: 56px; }
.t57 { width: 57px; }
.t61 { width: 61px; }
.t62 { width: 62px; }
.t63 { width: 63px; }
.t102 { width: 102px; }
.t104 { width: 104px; }
.t71 { width: 71px; overflow: hidden; }
.t33 { width: 33px; }
.t31 { width: 31px; }
.tab-last {
    flex: 1;
    border-right: 0;
}
.tab-on {
    background: #fff;
    font-size: 12.8px;
    font-weight: 700;
    color: #444;
}
.tab-plus {
    position: absolute;
    right: 6px;
    bottom: 5px;
}

/* status bar */
.statusbar {
    height: 21px;
    flex: none;
    display: flex;
    align-items: center;
    gap: 17px;
    padding-left: 3px;
    background: #e9e9e9;
    font-size: 11.500px;
    color: #444;
}
.status-cells {
    height: 100%;
    margin-left: auto;
    display: flex;
}
.cell {
    height: 100%;
    box-sizing: border-box;
    border-left: 1px solid #d4d4d4;
}
.c128 { width: 128px; }
.c27 { width: 27px; }
.c46 { width: 46px; }
.pager {
    width: 71px;
    display: flex;
    align-items: center;
    justify-content: center;
    gap: 7px;
}
.view-modes {
    width: 69px;
    box-sizing: border-box;
    display: flex;
    align-items: center;
    gap: 11px;
    padding-left: 8px;
    border-left: 1px solid #d4d4d4;
}

/* windows taskbar */
.taskbar {
    flex: 1;
    min-height: 0;
    display: flex;
    align-items: stretch;
    background: #d9d5da;
    font-family: "Open Sans", sans-serif;
    color: #111;
}
.start {
    width: 48px;
    flex: none;
    display: flex;
    align-items: center;
    justify-content: center;
}
.task-search {
    width: 287px;
    flex: none;
    position: relative;
    overflow: hidden;
    display: flex;
    align-items: center;
    gap: 9px;
    padding-left: 14px;
    box-sizing: border-box;
    background: #fff;
    font-size: 14px;
}
.train {
    position: absolute;
    right: 0;
    top: 0;
}
.task-apps {
    display: flex;
}
.task-app {
    width: 49.300px;
    position: relative;
    box-sizing: border-box;
    display: flex;
    align-items: center;
    justify-content: center;
}
.task-open::after {
    content: "";
    position: absolute;
    left: 5px;
    right: 5px;
    bottom: 0;
    height: 2px;
    background: #0a78d4;
}
.task-active {
    background: #eeecef;
    border-bottom: 2px solid #0a78d4;
}
.xl {
    font-family: "Open Sans", sans-serif;
    font-size: 10px;
    font-weight: 700;
    fill: #fff;
}
.tray {
    flex: 1;
    display: flex;
    align-items: center;
    font-size: 10.8px;
}
.weather {
    display: flex;
    align-items: center;
    gap: 3px;
    margin-left: 135px;
    font-size: 13px;
}
.weather-num {
    font-family: "Open Sans", sans-serif;
    font-size: 9px;
    fill: #fff;
}
.tray-up {
    margin-left: 25px;
}
.tray-plug {
    margin-left: 12px;
}
.tray-net {
    margin-left: 7px;
}
.tray-lang, .tray-clock {
    display: flex;
    flex-direction: column;
    align-items: center;
    line-height: 18px;
}
.tray-lang {
    margin-left: 10px;
}
.tray-clock {
    margin-left: 9px;
}
.tray-note {
    margin-left: 15px;
}
```
